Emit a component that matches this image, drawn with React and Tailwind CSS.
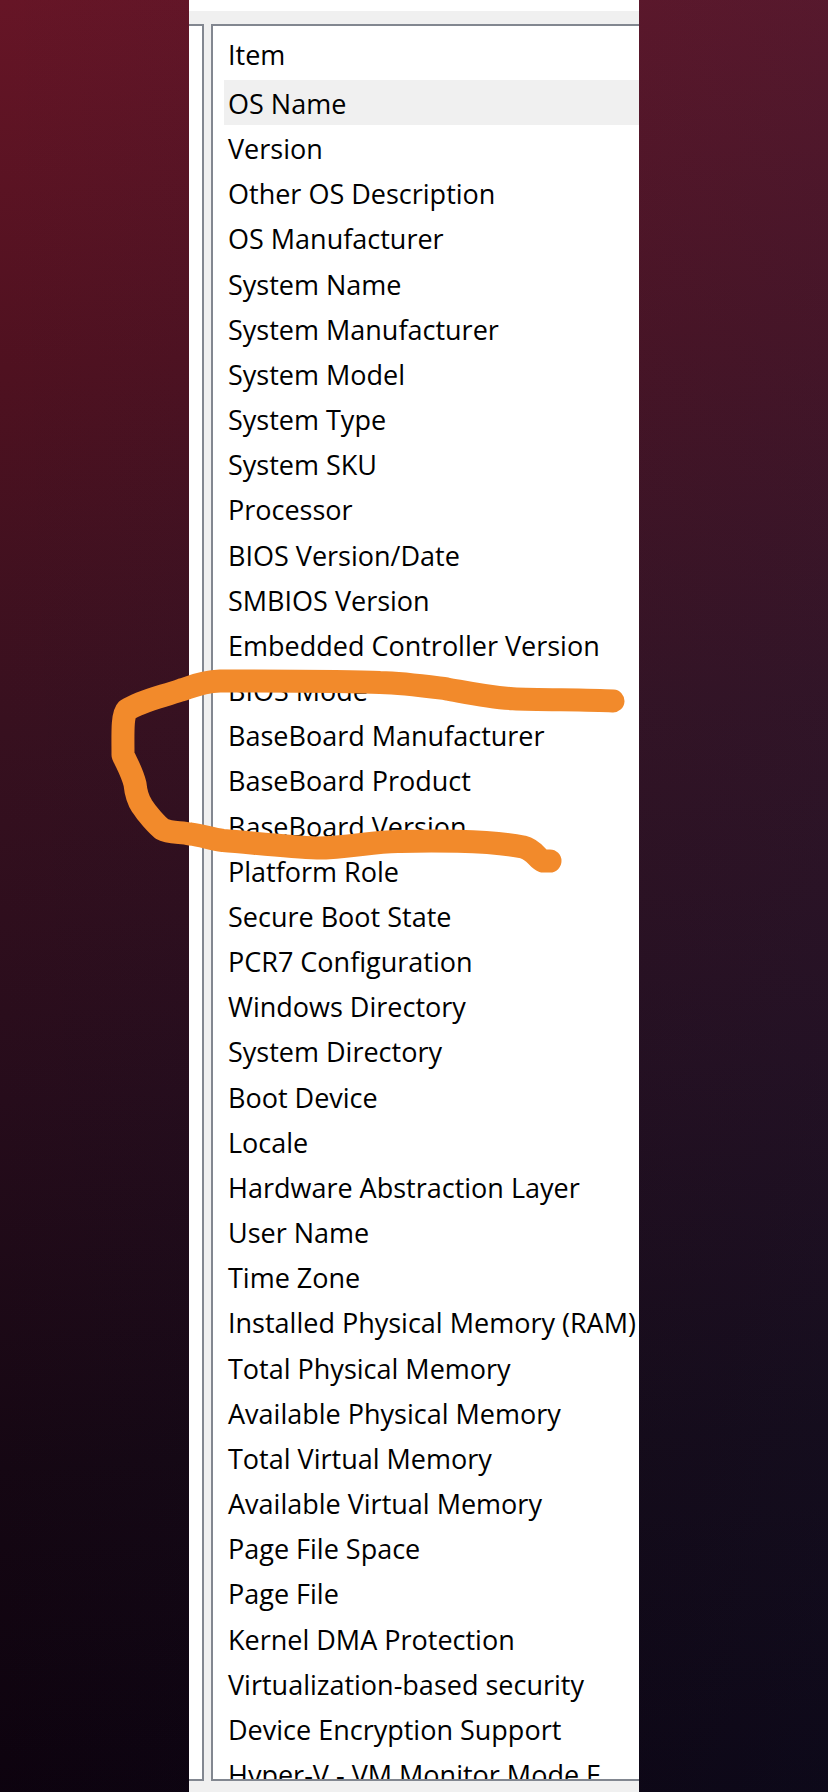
const items = [
  "OS Name",
  "Version",
  "Other OS Description",
  "OS Manufacturer",
  "System Name",
  "System Manufacturer",
  "System Model",
  "System Type",
  "System SKU",
  "Processor",
  "BIOS Version/Date",
  "SMBIOS Version",
  "Embedded Controller Version",
  "BIOS Mode",
  "BaseBoard Manufacturer",
  "BaseBoard Product",
  "BaseBoard Version",
  "Platform Role",
  "Secure Boot State",
  "PCR7 Configuration",
  "Windows Directory",
  "System Directory",
  "Boot Device",
  "Locale",
  "Hardware Abstraction Layer",
  "User Name",
  "Time Zone",
  "Installed Physical Memory (RAM)",
  "Total Physical Memory",
  "Available Physical Memory",
  "Total Virtual Memory",
  "Available Virtual Memory",
  "Page File Space",
  "Page File",
  "Kernel DMA Protection",
  "Virtualization-based security",
  "Device Encryption Support",
  "Hyper-V - VM Monitor Mode E",
];

function Marker() {
  return (
    <svg
      className="pointer-events-none absolute top-0 left-0 overflow-visible"
      width="450"
      height="900"
      viewBox="0 0 450 900"
      fill="none"
      aria-hidden="true"
    >
      <path
        d="M424 701 C400 699.500 350 700 324 698.700 C300 697.500 280 693 258 689 C235 686 215 683 191 682.500 C160 681 70 681 31 681 C10 682 0 688 -8 690 C-28 697 -48 701 -62 710 C-67 715 -66 735 -66 755 C-62 764 -57 772 -54 784 C-53 794 -51 800 -47 806 C-42 814 -32 825 -27 829 C-20 833 -8 832 1 834 C12 835 22 839 34 840.500 C65 843 100 847 128 848 C160 848 185 841 211 841.500 C235 840.500 300 840 334 847 C346 850 348 859 354 861 L361 861"
        stroke="#f28a2b"
        strokeWidth="23"
        strokeLinecap="round"
        strokeLinejoin="round"
      />
    </svg>
  );
}

export default function App() {
  return (
    <div className="flex min-h-screen justify-center bg-[linear-gradient(90deg,transparent,rgba(20,45,85,0.16)),linear-gradient(177deg,#661526_0%,#4f1120_20%,#37101f_40%,#260c1b_60%,#150713_80%,#0c020e_100%)] font-['Open_Sans','Noto_Sans',sans-serif] text-[27px] leading-9 text-black">
      <main className="relative flex w-[450px] flex-col bg-[#f0f0f0]">
        <div className="h-[11px] bg-white" />
        <div className="mt-[13px] mb-[11px] flex grow gap-[7px]">
          <div className="w-[15px] border-y-2 border-r-2 border-[#828790] bg-white" />
          <div className="flex min-w-0 grow flex-col border-y-2 border-l-2 border-[#828790] bg-white pl-[11px]">
            <table className="flex grow flex-col overflow-hidden text-left whitespace-nowrap">
              <thead className="block">
                <tr className="block">
                  <th scope="col" className="block h-[54px] pt-[11px] pl-1 font-normal">Item</th>
                </tr>
              </thead>
              <tbody className="grid grow grid-rows-[repeat(37,1fr)_28px]">
                {items.map((item, i) => (
                  <tr key={item} className={i === 0 ? "flex overflow-hidden bg-[#f0f0f0]" : "flex overflow-hidden"}>
                    <td className="block pt-1.5 pl-1">{item}</td>
                  </tr>
                ))}
              </tbody>
            </table>
          </div>
        </div>
        <Marker />
      </main>
    </div>
  );
}
